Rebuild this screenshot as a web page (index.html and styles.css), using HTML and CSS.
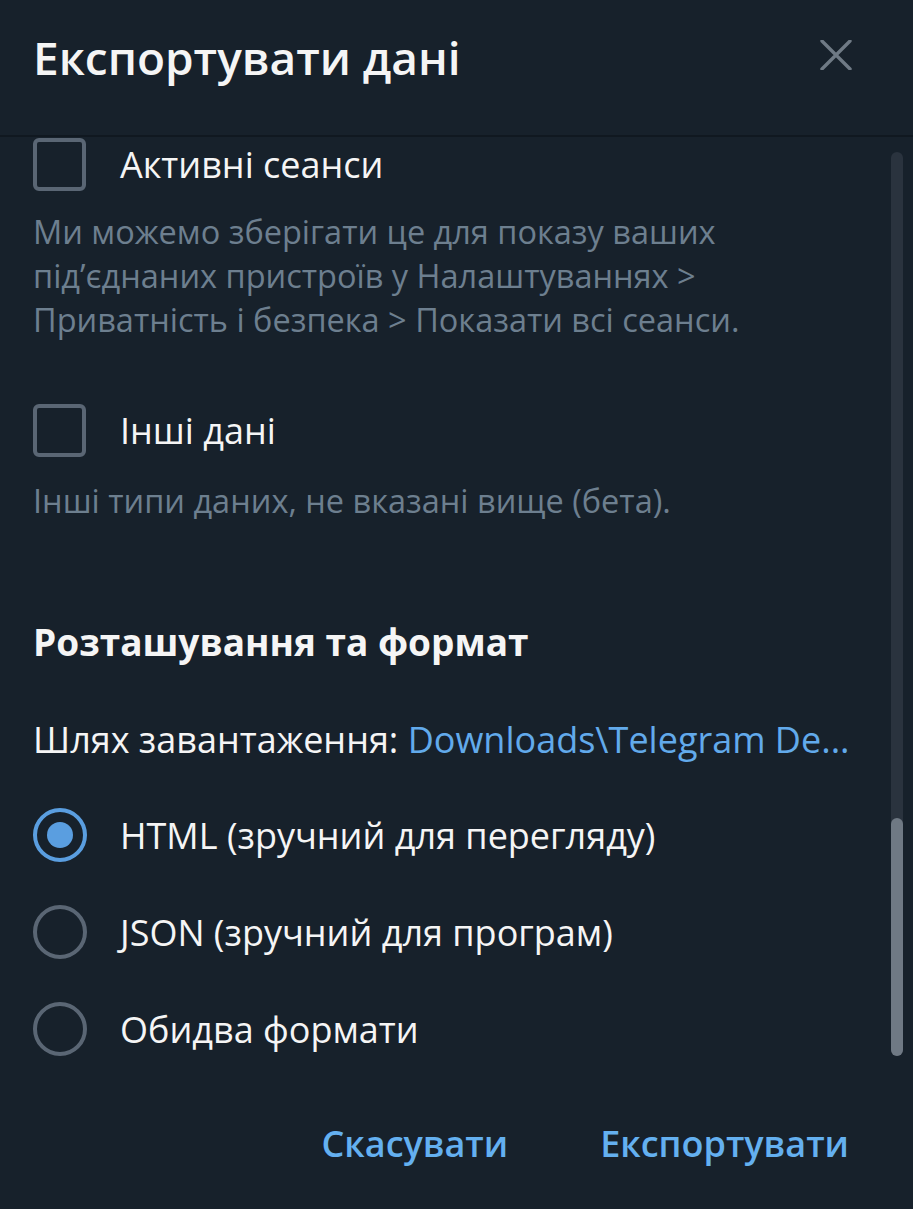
FILE: index.html
```html
<!DOCTYPE html>
<html lang="uk">
<head>
    <meta charset="UTF-8">
    <title>Експортувати дані</title>
    <link rel="stylesheet" href="styles.css">
</head>
<body>
    <div class="dialog">
        <div class="dialog-header">
            <div class="dialog-title">Експортувати дані</div>
            <svg class="close-icon" width="32" height="30" viewBox="0 0 32 30">
                <path d="M2 1 L30 29 M30 1 L2 29" stroke="#6f7a85" stroke-width="3.4" stroke-linecap="round"/>
            </svg>
        </div>

        <div class="dialog-body">
            <div class="scroll-content">
                <div class="check-row">
                    <span class="checkbox"></span>
                    <span class="row-label">Активні сеанси</span>
                </div>
                <div class="row-desc">Ми можемо зберігати це для показу ваших під’єднаних пристроїв у Налаштуваннях &gt; Приватність і безпека &gt; Показати всі сеанси.</div>

                <div class="check-row second">
                    <span class="checkbox"></span>
                    <span class="row-label">Інші дані</span>
                </div>
                <div class="row-desc">Інші типи даних, не вказані вище (бета).</div>

                <div class="section-title">Розташування та формат</div>

                <div class="path-row">Шлях завантаження: <span class="path-link">Downloads\Telegram De...</span></div>

                <div class="radio-row">
                    <span class="radio checked"></span>
                    <span class="row-label">HTML (зручний для перегляду)</span>
                </div>
                <div class="radio-row">
                    <span class="radio"></span>
                    <span class="row-label">JSON (зручний для програм)</span>
                </div>
                <div class="radio-row">
                    <span class="radio"></span>
                    <span class="row-label">Обидва формати</span>
                </div>
            </div>
            <div class="scroll-track">
                <div class="scroll-thumb"></div>
            </div>
        </div>

        <div class="dialog-footer">
            <span class="footer-button">Скасувати</span>
            <span class="footer-button">Експортувати</span>
        </div>
    </div>
</body>
</html>
```

FILE: styles.css
```css
/* Загальне */
body {
    margin: 0;
    background-color: #17212b;
    font-family: 'Open Sans', 'Noto Sans', sans-serif;
    color: #f5f5f5;
}

.dialog {
    width: 913px;
    height: 1209px;
    display: flex;
    flex-direction: column;
    overflow: hidden;
}

/* Шапка */
.dialog-header {
    height: 135px;
    flex-shrink: 0;
    display: flex;
    align-items: center;
    justify-content: space-between;
    padding: 0 61px 0 33px;
    border-bottom: 2px solid #101820;
}

.dialog-title {
    font-size: 46px;
    font-weight: 600;
    margin-top: -22px;
}

.close-icon {
    margin-top: -26px;
}

/* Прокручувана частина */
.dialog-body {
    flex: 1;
    position: relative;
    overflow: hidden;
}

.scroll-content {
    padding: 1px 60px 0 33px;
}

.check-row {
    display: flex;
    align-items: center;
    gap: 34px;
    height: 52px;
}

.check-row.second {
    margin-top: 62px;
}

.checkbox {
    width: 45px;
    height: 45px;
    border: 4px solid #5a6674;
    border-radius: 6px;
    flex-shrink: 0;
}

.row-label {
    font-size: 36px;
}

.row-desc {
    font-size: 32.5px;
    line-height: 44px;
    color: #6d7f8f;
    margin-top: 20px;
}

.check-row.second + .row-desc {
    margin-top: 23px;
}

.section-title {
    font-size: 37px;
    font-weight: 700;
    margin-top: 93px;
}

.path-row {
    font-size: 36px;
    margin-top: 48px;
    white-space: nowrap;
}

.path-link {
    color: #62aaeb;
}

.radio-row {
    display: flex;
    align-items: center;
    gap: 33px;
    height: 54px;
    margin-top: 44px;
}

.radio-row + .radio-row {
    margin-top: 43px;
}

.radio {
    width: 46px;
    height: 46px;
    border: 4px solid #5a6674;
    border-radius: 50%;
    flex-shrink: 0;
    position: relative;
}

.radio.checked {
    border-color: #5a9ee0;
}

.radio.checked::after {
    content: "";
    position: absolute;
    left: 10px;
    top: 10px;
    width: 26px;
    height: 26px;
    border-radius: 50%;
    background-color: #5a9ee0;
}

/* Смуга прокрутки */
.scroll-track {
    position: absolute;
    right: 10px;
    top: 15px;
    bottom: 27px;
    width: 12px;
    border-radius: 6px;
    background-color: #2a333e;
}

.scroll-thumb {
    position: absolute;
    left: 0;
    right: 0;
    bottom: 0;
    height: 238px;
    border-radius: 6px;
    background-color: #6f7984;
}

/* Кнопки */
.dialog-footer {
    height: 120px;
    flex-shrink: 0;
    display: flex;
    justify-content: flex-end;
    align-items: center;
    gap: 92px;
    padding: 0 64px 6px 0;
}

.footer-button {
    font-size: 36px;
    font-weight: 600;
    color: #64b0f0;
}
```
